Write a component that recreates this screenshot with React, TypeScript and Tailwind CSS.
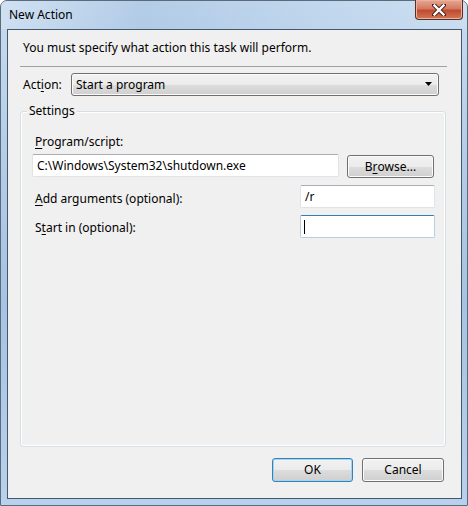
import React from 'react';

const font = { fontFamily: '"Segoe UI", "Noto Sans", "Open Sans", sans-serif' };

const Mn: React.FC<{ children: React.ReactNode }> = ({ children }) => (
  <span className="underline underline-offset-2 decoration-1">{children}</span>
);

const WinButton: React.FC<{ children: React.ReactNode; primary?: boolean; className?: string }> = ({ children, primary, className }) => (
  <div
    className={`flex items-center justify-center rounded-[3px] border text-[12px] text-black ${primary ? 'border-[#3c7fb1] shadow-[inset_0_0_0_1px_#9bd7f7]' : 'border-[#707070] shadow-[inset_0_0_0_1px_#fbfbfb]'} bg-[linear-gradient(#f2f2f2_0%,#ebebeb_50%,#dddddd_50%,#cfcfcf_100%)] ${className || ''}`}
  >
    {children}
  </div>
);

const TextBox: React.FC<{ value?: string; focused?: boolean; className?: string }> = ({ value, focused, className }) => (
  <div
    className={`flex items-center rounded-[2px] border bg-white pl-[4px] text-[12px] text-black ${focused ? 'border-[#b5cfe7] border-t-[#3d7bad]' : 'border-[#e2e3ea] border-t-[#abadb3]'} ${className || ''}`}
  >
    {value}
    {focused && <div className="ml-[-1px] h-[14px] w-px bg-black" />}
  </div>
);

export default function App() {
  return (
    <div
      className="relative flex h-[506px] w-[468px] flex-col rounded-t-[7px] border border-[#5a6b7c] bg-[linear-gradient(180deg,#c8dcf0_0%,#b4cde8_30%,#a7c3e3_60%,#b8d1ec_100%)]"
      style={font}
    >
      {/* title bar */}
      <div className="flex h-[28px] items-center pl-[8px] text-[12px] text-black bg-[linear-gradient(90deg,rgba(255,255,255,0.15)_0%,rgba(120,160,205,0.25)_30%,rgba(150,185,220,0.2)_60%,rgba(255,255,255,0.1)_100%)]">
        New Action
      </div>
      <div className="absolute right-[4px] top-[-1px] flex h-[20px] w-[48px] items-center justify-center rounded-b-[4px] border border-t-0 border-[#5b2d22] bg-[linear-gradient(#e8a793_0%,#d47a62_45%,#c04a2e_55%,#d0775a_100%)] shadow-[inset_0_0_0_1px_#eab3a0]">
        <svg width="14" height="12" viewBox="0 0 14 12">
          <path d="M2 1 L12 11 M12 1 L2 11" stroke="#4a2018" strokeWidth="4.2" strokeLinecap="square" />
          <path d="M2.5 1.5 L11.5 10.5 M11.5 1.5 L2.5 10.5" stroke="#ffffff" strokeWidth="2.4" strokeLinecap="square" />
        </svg>
      </div>

      {/* client */}
      <div className="ml-[6px] mr-[5px] mb-[6px] flex flex-1 flex-col border border-[#44576b] bg-[#f0f0f0] text-[12px] text-black">
        <div className="pl-[15px] pt-[10px] leading-[16px]">You must specify what action this task will perform.</div>
        <div className="ml-[12px] mt-[10px] w-[427px] border-t border-[#a0a0a0]" />

        <div className="mt-[6px] flex items-center pl-[15px]">
          <div className="w-[48px] pt-[1px]">
            Act<Mn>i</Mn>on:
          </div>
          <WinButton className="h-[23px] w-[368px] !justify-between px-[4px]">
            <span>Start a program</span>
            <svg width="8" height="5" viewBox="0 0 8 5" className="mr-[1px]">
              <path d="M0 0 H7 L3.5 4 Z" fill="#000" />
            </svg>
          </WinButton>
        </div>

        {/* Settings group */}
        <div className="relative ml-[12px] mt-[15px] h-[336px] w-[426px] rounded-[3px] border border-[#d5dfe5] shadow-[inset_0_0_0_1px_#ffffff]">
          <div className="absolute left-[6px] top-[-9px] bg-[#f0f0f0] px-[2px] leading-[16px]">Settings</div>
          <div className="flex flex-col pl-[14px] pt-[22px]">
            <div className="leading-[16px]">
              <Mn>P</Mn>rogram/script:
            </div>
            <div className="mt-[3px] flex items-center">
              <TextBox value={'C:\\Windows\\System32\\shutdown.exe'} className="h-[23px] w-[307px] ml-[-3px]" />
              <WinButton className="ml-[8px] mt-[2px] h-[23px] w-[87px]">
                B<Mn>r</Mn>owse...
              </WinButton>
            </div>
            <div className="mt-[7px] flex items-center">
              <div className="w-[265px] pt-[4px]">
                <Mn>A</Mn>dd arguments (optional):
              </div>
              <TextBox value="/r" className="h-[23px] w-[135px]" />
            </div>
            <div className="mt-[7px] flex items-center">
              <div className="w-[265px] pt-[2px]">
                S<Mn>t</Mn>art in (optional):
              </div>
              <TextBox focused className="h-[23px] w-[135px]" />
            </div>
          </div>
        </div>

        <div className="mt-[11px] flex justify-end gap-[9px] pr-[17px]">
          <WinButton primary className="h-[24px] w-[81px]">OK</WinButton>
          <WinButton className="h-[24px] w-[82px]">Cancel</WinButton>
        </div>
      </div>
    </div>
  );
}
